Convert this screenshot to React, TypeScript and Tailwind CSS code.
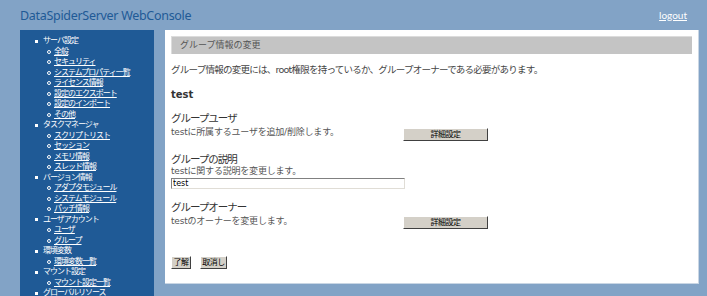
import React from "react";

type Item = { label: string; children?: string[] };

const menu: Item[] = [
  { label: "サーバ設定", children: ["全般", "セキュリティ", "システムプロパティ一覧", "ライセンス情報", "設定のエクスポート", "設定のインポート", "その他"] },
  { label: "タスクマネージャ", children: ["スクリプトリスト", "セッション", "メモリ情報", "スレッド情報"] },
  { label: "バージョン情報", children: ["アダプタモジュール", "システムモジュール", "パッチ情報"] },
  { label: "ユーザアカウント", children: ["ユーザ", "グループ"] },
  { label: "環境変数", children: ["環境変数一覧"] },
  { label: "マウント設定", children: ["マウント設定一覧"] },
  { label: "グローバルリソース" },
];

const FONT = "font-['DejaVu_Sans','Noto_Sans_CJK_JP',sans-serif]";

function WinButton({ children, w }: { children: React.ReactNode; w: string }) {
  return (
    <button
      className={`${w} h-[13px] bg-[#d4d0c8] border border-t-white border-l-white border-r-[#404040] border-b-[#404040] text-[8px] leading-[11px] tracking-[-0.5px] text-black flex items-center justify-center p-0`}
    >
      {children}
    </button>
  );
}

export default function App() {
  return (
    <div className={`w-[707px] h-[296px] overflow-hidden bg-[#82a3c6] ${FONT}`}>
      <div className="h-[30px] flex items-center justify-between pl-[20px] pr-[20px]">
        <span className="text-[12.5px] text-[#1f5a96] tracking-[-0.3px] font-['Noto_Sans',sans-serif] pt-[2px]">
          DataSpiderServer WebConsole
        </span>
        <a className="text-[10px] text-white underline pl-[2px] font-['Lato',sans-serif]">logout</a>
      </div>
      <div className="flex pl-[20px] gap-[11px]">
        <div className="w-[134px] h-[266px] bg-[#1f5a96] pt-[6px] text-white text-[8px] leading-[10.5px] tracking-[-1px]">
          {menu.map((m) => (
            <div key={m.label}>
              <div className="flex items-center h-[10.5px]">
                <span className="ml-[15px] w-[3px] h-[3px] bg-white" />
                <span className="ml-[5px] whitespace-nowrap">{m.label}</span>
              </div>
              {m.children?.map((c) => (
                <div key={c} className="flex items-center h-[10.5px]">
                  <span className="ml-[27px] w-[4px] h-[4px] rounded-full border border-white" />
                  <span className="ml-[3px] underline whitespace-nowrap">{c}</span>
                </div>
              ))}
            </div>
          ))}
        </div>
        <div className="w-[534px] h-[254px] bg-white border-r border-b border-[#c9d6e4] p-[6px] pt-[6px] text-[#333]">
          <div className="h-[18px] bg-[#c4c4c4] border-t border-l border-[#dcdcdc] flex items-center pl-[8px] text-[9px] text-[#555]">
            グループ情報の変更
          </div>
          <div className="mt-[10px] text-[9.5px] leading-[12px] tracking-[-0.75px] text-[#444]">
            グループ情報の変更には、root権限を持っているか、グループオーナーである必要があります。
          </div>
          <div className="mt-[13px] text-[10px] font-bold leading-[12px] text-[#333] font-['DejaVu_Sans',sans-serif]">test</div>
          <div className="mt-[11px] text-[10.5px] leading-[12px] tracking-[-1px] text-[#333]">グループユーザ</div>
          <div className="flex items-center">
            <div className="w-[232px] text-[9px] leading-[13px] tracking-[-0.2px] text-[#555]">testに所属するユーザを追加/削除します。</div>
            <div className="mt-[4px]">
              <WinButton w="w-[85px]">詳細設定</WinButton>
            </div>
          </div>
          <div className="mt-[12px] text-[10.5px] leading-[12px] tracking-[-1px] text-[#333]">グループの説明</div>
          <div className="text-[9px] leading-[13px] tracking-[-0.2px] text-[#555]">testに関する説明を変更します。</div>
          <input
            defaultValue="test"
            className="block w-[234px] h-[11px] border border-t-[#808080] border-l-[#808080] border-r-[#e0ddd6] border-b-[#e0ddd6] text-[8px] leading-[9px] px-[1px] text-black outline-none"
          />
          <div className="mt-[12px] text-[10.5px] leading-[12px] tracking-[-1px] text-[#333]">グループオーナー</div>
          <div className="flex items-center">
            <div className="w-[232px] text-[9px] leading-[13px] tracking-[-0.2px] text-[#555]">testのオーナーを変更します。</div>
            <div className="mt-[3px]">
              <WinButton w="w-[85px]">詳細設定</WinButton>
            </div>
          </div>
          <div className="mt-[27px] flex gap-[9px]">
            <WinButton w="w-[20px]">了解</WinButton>
            <WinButton w="w-[27px]">取消し</WinButton>
          </div>
        </div>
      </div>
    </div>
  );
}
